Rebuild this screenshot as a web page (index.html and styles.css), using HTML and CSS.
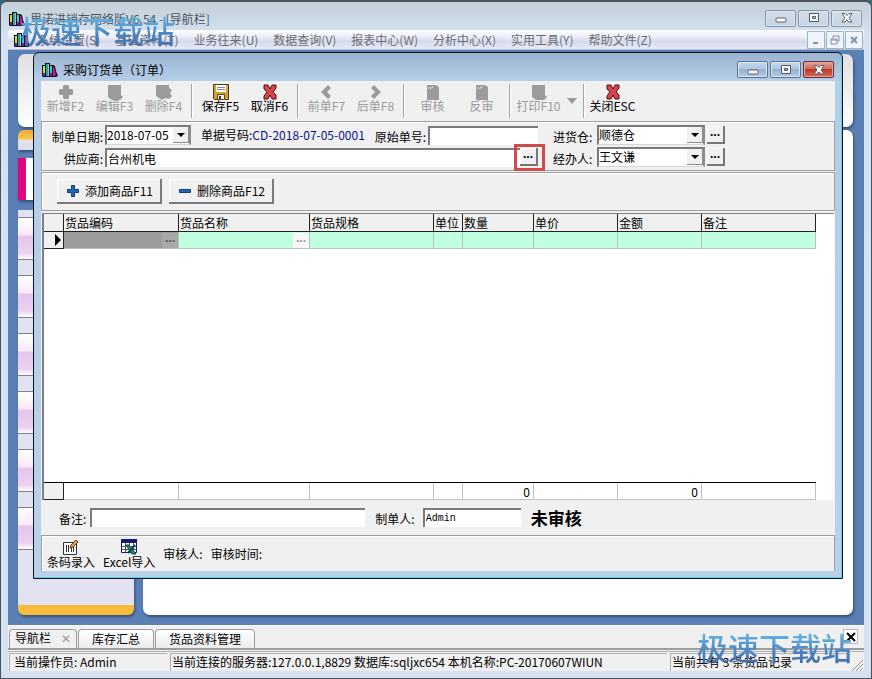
FILE: index.html
```
<!DOCTYPE html>
<html lang="zh-CN">

<head>
    <meta charset="UTF-8">
    <meta name="viewport" content="width=device-width, initial-scale=1.0">
    <title>里诺进销存网络版V6.54</title>
    <link rel="stylesheet" href="styles.css">
</head>

<body>
    <!-- Shared icons -->
    <svg class="sprite" aria-hidden="true">
        <symbol id="icon-books" viewBox="0 0 16 16">
            <path fill="#111" d="M0 3h3V1h5v2h3l2 1 1 5 2 5-2 1H1l-1-1z"/>
            <path fill="#d6df2a" d="M1 4h2v10H1z"/>
            <path fill="#1fa6a8" d="M4 2h2v12H4z"/>
            <path fill="#b8b8c8" d="M6 2h1v12H6z"/>
            <path fill="#28d3d8" d="M8 4h2v10H8z"/>
            <path fill="#c81ea0" d="M11 5l1 0 2 8-2 1h-1z"/>
            <path fill="#7a1fb0" d="M1 11h2v3H1zM8 11h2v3H8z"/>
        </symbol>
        <symbol id="icon-min" viewBox="0 0 12 12">
            <rect x="1" y="6" width="10" height="4" rx="1" fill="#fff" stroke="#5a6270"/>
        </symbol>
        <symbol id="icon-max" viewBox="0 0 12 12">
            <path fill="#fff" stroke="#4f5866" fill-rule="evenodd" d="M1.500 1.500h9v8h-9zM4.500 4.500h3v2h-3z"/>
        </symbol>
        <symbol id="icon-x" viewBox="0 0 12 12">
            <path fill="#fff" stroke="#5a6270" d="M1 1.500h3l2 2 2-2h3L8 6l3 4H8L6 8l-2 2H1l3-4z"/>
        </symbol>
        <symbol id="icon-cross" viewBox="0 0 16 16">
            <path fill="#d9434a" stroke="#4a1114" d="M2 1h4l2 4 2-4h4v3l-3 4 3 3v4h-4l-2-4-2 4H2v-3l3-4-3-3z"/>
        </symbol>
        <symbol id="icon-doc" viewBox="0 0 16 16">
            <path fill="#9b9b9b" d="M1 1h13v10l2 2-3 3H5l-4-3z"/>
        </symbol>
        <symbol id="icon-check" viewBox="0 0 16 16">
            <path fill="#9b9b9b" d="M2 1h9l3 2v13H2z"/>
            <path fill="none" stroke="#ededed" d="M3 4.500l1.500-1 1 1 3-2"/>
        </symbol>
    </svg>

    <div class="app">
        <header class="titlebar">
            <svg class="icon16"><use href="#icon-books"/></svg>
            <h1>里诺进销存网络版V6.54 - [导航栏]</h1>
            <div class="window-buttons">
                <button type="button" aria-label="最小化"><svg><use href="#icon-min"/></svg></button>
                <button type="button" aria-label="最大化"><svg><use href="#icon-max"/></svg></button>
                <button type="button" aria-label="关闭"><svg><use href="#icon-x"/></svg></button>
            </div>
        </header>

        <nav class="menubar">
            <svg class="icon16"><use href="#icon-books"/></svg>
            <a href="#">系统设置(S)</a>
            <a href="#">基础资料(T)</a>
            <a href="#">业务往来(U)</a>
            <a href="#">数据查询(V)</a>
            <a href="#">报表中心(W)</a>
            <a href="#">分析中心(X)</a>
            <a href="#">实用工具(Y)</a>
            <a href="#">帮助文件(Z)</a>
            <div class="child-buttons">
                <button type="button" aria-label="最小化"><svg viewBox="0 0 12 12"><path d="M3 9h5"/></svg></button>
                <button type="button" aria-label="还原"><svg viewBox="0 0 12 12"><path d="M4 4V2h6v5H8M2 5h6v5H2zM2 6h6"/></svg></button>
                <button type="button" aria-label="关闭"><svg viewBox="0 0 12 12"><path d="M3 3l6 6M9 3l-6 6"/></svg></button>
            </div>
        </nav>

        <main class="desktop">
            <div class="nav-top"></div>
            <div class="nav-body">
                <aside class="sidebar">
                    <div class="side-head"></div>
                    <div class="side-active"></div>
                    <div class="side-list">
                        <div class="side-item"></div>
                        <div class="side-item"></div>
                        <div class="side-item"></div>
                        <div class="side-item"></div>
                        <div class="side-item"></div>
                        <div class="side-item"></div>
                    </div>
                </aside>
                <div class="nav-content"></div>
            </div>

            <section class="dialog">
                <div class="dialog-title">
                    <svg class="icon16"><use href="#icon-books"/></svg>
                    <h2>采购订货单（订单）</h2>
                    <div class="window-buttons">
                        <button type="button" aria-label="最小化"><svg><use href="#icon-min"/></svg></button>
                        <button type="button" aria-label="最大化"><svg><use href="#icon-max"/></svg></button>
                        <button type="button" class="close" aria-label="关闭"><svg><use href="#icon-x"/></svg></button>
                    </div>
                </div>

                <div class="dialog-body">
                    <div class="toolbar">
                        <button type="button" disabled>
                            <svg class="icon16" viewBox="0 0 16 16"><path fill="#9b9b9b" d="M5 2l1-1h4l1 1v3h3l1 1v4l-1 1h-3v3l-1 1H6l-1-1v-3H2l-1-1V6l1-1h3z"/></svg>
                            新增F2
                        </button>
                        <button type="button" disabled><svg class="icon16"><use href="#icon-doc"/></svg>编辑F3</button>
                        <button type="button" disabled>
                            <svg class="icon16" viewBox="0 0 16 16"><path fill="#9b9b9b" d="M0 1h13v3l3 2-2 3 2 3-3 3-4-1-3 2-6-4z"/></svg>
                            删除F4
                        </button>
                        <span class="sep"></span>
                        <button type="button">
                            <svg class="icon16" viewBox="0 0 16 16">
                                <path fill="#d9a02b" stroke="#4a3a1a" d="M.5.5h15v15h-14l-1-1z"/>
                                <path fill="#fff" d="M3 1h10v7H3z"/>
                                <path stroke="#8a8a9c" d="M4 3.500h8M4 5.500h8"/>
                                <path fill="#f4f0dc" stroke="#5a4a2a" d="M4.500 10.500h7v5h-7z"/>
                                <path fill="#3a3a4a" d="M6 12h2v3H6z"/>
                            </svg>
                            保存F5
                        </button>
                        <button type="button"><svg class="icon16"><use href="#icon-cross"/></svg>取消F6</button>
                        <span class="sep"></span>
                        <button type="button" disabled>
                            <svg class="icon16" viewBox="0 0 16 16"><path fill="#9b9b9b" d="M9 1l3 3-4 4 4 4-3 3-7-7z"/></svg>
                            前单F7
                        </button>
                        <button type="button" disabled>
                            <svg class="icon16" viewBox="0 0 16 16"><path fill="#9b9b9b" d="M6 1L3 4l4 4-4 4 3 3 7-7z"/></svg>
                            后单F8
                        </button>
                        <span class="sep"></span>
                        <button type="button" disabled><svg class="icon16"><use href="#icon-check"/></svg>审核</button>
                        <button type="button" disabled><svg class="icon16"><use href="#icon-check"/></svg>反审</button>
                        <span class="sep"></span>
                        <button type="button" disabled><svg class="icon16"><use href="#icon-doc"/></svg>打印F10</button>
                        <button type="button" class="more" aria-label="打印选项" disabled>
                            <svg viewBox="0 0 10 6"><path fill="#9b9b9b" d="M0 0h10L5 6z"/></svg>
                        </button>
                        <span class="sep"></span>
                        <button type="button"><svg class="icon16"><use href="#icon-cross"/></svg>关闭ESC</button>
                    </div>

                    <form class="order-form">
                        <div class="form-main">
                            <div class="form-row">
                                <label class="first" for="order-date">制单日期:</label>
                                <span class="combo date">
                                    <select id="order-date"><option>2018-07-05</option></select>
                                    <i></i>
                                </span>
                                <span class="order-no">单据号码:<b>CD-2018-07-05-0001</b></span>
                                <label for="origin-no">原始单号:</label>
                                <input type="text" id="origin-no">
                            </div>
                            <div class="form-row">
                                <label class="first" for="supplier">供应商:</label>
                                <div class="supplier">
                                    <input type="text" id="supplier" value="台州机电">
                                    <button type="button" class="dots" aria-label="选择供应商">...</button>
                                </div>
                            </div>
                        </div>
                        <div class="form-side">
                            <div class="form-row">
                                <label for="store">进货仓:</label>
                                <span class="combo">
                                    <select id="store"><option>顺德仓</option></select>
                                    <i></i>
                                </span>
                                <button type="button" class="dots" aria-label="选择仓库">...</button>
                            </div>
                            <div class="form-row">
                                <label for="handler">经办人:</label>
                                <span class="combo">
                                    <select id="handler"><option>王文谦</option></select>
                                    <i></i>
                                </span>
                                <button type="button" class="dots" aria-label="选择经办人">...</button>
                            </div>
                        </div>
                    </form>

                    <div class="item-actions">
                        <button type="button">
                            <svg viewBox="0 0 12 12"><path fill="#1f66b5" stroke="#123f7a" d="M4.500.5h3v4h4v3h-4v4h-3v-4h-4v-3h4z"/></svg>
                            添加商品F11
                        </button>
                        <button type="button">
                            <svg viewBox="0 0 12 12"><path fill="#1f66b5" stroke="#123f7a" d="M.5 4.500h11v3H.5z"/></svg>
                            删除商品F12
                        </button>
                    </div>

                    <div class="grid">
                        <table>
                            <colgroup>
                                <col class="c-mark"><col class="c-code"><col class="c-name"><col class="c-spec"><col class="c-unit">
                                <col class="c-qty"><col class="c-price"><col class="c-sum"><col class="c-note">
                            </colgroup>
                            <thead>
                                <tr>
                                    <th></th>
                                    <th>货品编码</th>
                                    <th>货品名称</th>
                                    <th>货品规格</th>
                                    <th>单位</th>
                                    <th>数量</th>
                                    <th>单价</th>
                                    <th>金额</th>
                                    <th>备注</th>
                                </tr>
                            </thead>
                            <tbody>
                                <tr>
                                    <td class="mark"><svg viewBox="0 0 6 12"><path d="M0 0l6 6-6 6z"/></svg></td>
                                    <td class="selected"><button type="button" aria-label="选择货品编码">...</button></td>
                                    <td><button type="button" aria-label="选择货品名称">...</button></td>
                                    <td></td>
                                    <td></td>
                                    <td></td>
                                    <td></td>
                                    <td></td>
                                    <td></td>
                                </tr>
                            </tbody>
                        </table>
                        <table class="totals">
                            <colgroup>
                                <col class="c-mark"><col class="c-code"><col class="c-name"><col class="c-spec"><col class="c-unit">
                                <col class="c-qty"><col class="c-price"><col class="c-sum"><col class="c-note">
                            </colgroup>
                            <tbody>
                                <tr>
                                    <td class="mark"></td>
                                    <td></td>
                                    <td></td>
                                    <td></td>
                                    <td></td>
                                    <td>0</td>
                                    <td></td>
                                    <td>0</td>
                                    <td></td>
                                </tr>
                            </tbody>
                        </table>
                    </div>

                    <div class="remark-row">
                        <label for="remark">备注:</label>
                        <input type="text" id="remark" class="remark">
                        <label for="maker">制单人:</label>
                        <input type="text" id="maker" class="maker" value="Admin">
                        <strong>未审核</strong>
                    </div>

                    <div class="dialog-footer">
                        <button type="button">
                            <svg class="icon16" viewBox="0 0 16 16">
                                <path fill="#fff" stroke="#333" d="M.5 3.500h13v12H.5z"/>
                                <path stroke="#333" d="M3.500 6v7M5.500 6v7M8.500 8v5M10.500 6v7"/>
                                <path fill="#e0a040" stroke="#6b3a1a" d="M7 9l1-3 5-5 2 2-5 5z"/>
                            </svg>
                            条码录入
                        </button>
                        <button type="button">
                            <svg class="icon16" viewBox="0 0 16 16">
                                <path fill="#fff" stroke="#1a1a5a" d="M.5.5h15v13H.5z"/>
                                <path fill="#15157a" d="M0 0h16v4H0z"/>
                                <path stroke="#555" d="M1 7.500h14M1 10.500h14M4.500 4v9M8.500 4v9M12.500 4v9"/>
                                <path fill="#1c8f80" stroke="#0b4a44" d="M5 6h3l7 9h-4z"/>
                                <path stroke="#0b4a44" stroke-width="2" d="M14 6l-7 8"/>
                            </svg>
                            Excel导入
                        </button>
                        <span>审核人:</span>
                        <span>审核时间:</span>
                    </div>
                </div>
            </section>
        </main>

        <div class="tabs">
            <a href="#" class="active">导航栏<span>✕</span></a>
            <a href="#">库存汇总</a>
            <a href="#">货品资料管理</a>
            <button type="button" aria-label="关闭标签"><svg viewBox="0 0 10 10"><path d="M1 1l8 8M9 1l-8 8"/></svg></button>
        </div>

        <footer class="statusbar">
            <span class="operator">当前操作员: Admin</span>
            <span class="server">当前连接的服务器:127.0.0.1,8829 数据库:sqljxc654 本机名称:PC-20170607WIUN</span>
            <span class="records">当前共有 3 条货品记录</span>
            <svg viewBox="0 0 12 12"><path d="M1 12L12 1M5 12l7-7M9 12l3-3"/></svg>
        </footer>
    </div>

    <div class="watermark top">极速下载站</div>
    <div class="watermark bottom">极速下载站</div>
</body>

</html>
```

FILE: styles.css
```
* {
    box-sizing: border-box;
}

body {
    margin: 0;
    height: 100vh;
    position: relative;
    overflow: hidden;
    background-color: #2f6f70;
    font-family: "Noto Sans CJK SC", sans-serif;
    font-size: 12px;
    line-height: 16px;
    color: #000;
}

button,
input,
select {
    font: inherit;
    color: inherit;
    margin: 0;
    padding: 0;
    border: 0;
    border-radius: 0;
}

h1,
h2 {
    margin: 0;
    font-size: 12px;
    font-weight: normal;
}

a {
    color: inherit;
    text-decoration: none;
}

.sprite {
    display: none;
}

.icon16 {
    width: 16px;
    height: 16px;
    flex: none;
}

.app {
    height: 100%;
    display: flex;
    flex-direction: column;
    padding: 0 7px 7px;
    border: 1px solid #4a525c;
    border-top-width: 2px;
    border-radius: 7px 7px 0 0;
    background: linear-gradient(#c3cfd8, #d3e1f0 30px, #d5e2f1);
}

/* Title bar and menu */
.titlebar {
    height: 28px;
    flex: none;
    display: flex;
    align-items: center;
    gap: 5px;
    padding: 6px 2px 0 1px;
    color: #4c545c;
}

.titlebar .window-buttons {
    margin-top: -2px;
}

.window-buttons {
    display: flex;
    gap: 2px;
    margin-left: auto;
}

.window-buttons button {
    width: 31px;
    height: 17px;
    display: flex;
    align-items: center;
    justify-content: center;
    border: 1px solid #8795a7;
    border-radius: 2px;
    background: linear-gradient(#d3dee9, #c5d3e1);
    box-shadow: inset 0 0 0 1px #dde7f0;
}

.window-buttons svg {
    width: 12px;
    height: 12px;
}

.menubar {
    height: 20px;
    flex: none;
    display: flex;
    align-items: center;
    gap: 15px;
    padding: 0 1px 0 6px;
    border-bottom: 1px solid #b7bdd0;
    background: linear-gradient(#fff, #e9ebf6 40%, #d6daed 60%, #e8eaf6);
    color: #6c6c70;
}

.menubar .icon16 {
    margin-right: -8px;
}

.child-buttons {
    display: flex;
    gap: 1px;
    margin-left: auto;
}

.child-buttons button {
    width: 18px;
    height: 18px;
    display: flex;
    align-items: center;
    justify-content: center;
    border: 1px solid #9ab4cb;
    background-color: #f0f5fb;
}

.child-buttons svg {
    width: 12px;
    height: 12px;
    fill: none;
    stroke: #8192a3;
    stroke-width: 2;
}

.child-buttons button:nth-child(2) svg {
    stroke-width: 1;
}

/* Navigation page behind the dialog */
.desktop {
    position: relative;
    flex: 1;
    display: flex;
    flex-direction: column;
    gap: 3px;
    min-height: 0;
    padding: 4px 11px 10px 10px;
    background-color: #5b80b5;
}

.nav-top {
    height: 73px;
    flex: none;
    border-radius: 7px;
    background: linear-gradient(#e0e0e3, #fff);
    box-shadow: 1px 2px 3px #344f78;
}

.nav-body {
    flex: 1;
    display: flex;
    gap: 9px;
    min-height: 0;
}

.sidebar {
    width: 116px;
    display: flex;
    flex-direction: column;
}

.side-head {
    height: 20px;
    border-radius: 6px 6px 0 0;
    background: linear-gradient(#f3a93a, #fcc84b 9px, #e2e3ee 10px, #dcdde9);
    box-shadow: 1px 2px 3px #344f78;
}

.side-active {
    height: 42px;
    margin: 8px 0 10px;
    border-left: 8px solid #e0057f;
    background-color: #fff;
    box-shadow: 1px 2px 3px #344f78;
}

.side-list {
    flex: 1;
    display: flex;
    flex-direction: column;
    gap: 15px;
    padding-top: 7px;
    border-bottom: 10px solid #f6bd3d;
    border-radius: 0 0 6px 6px;
    background-color: #e3e2f1;
    box-shadow: 1px 2px 3px #344f78;
}

.side-item {
    height: 43px;
    border: solid #85808e;
    border-width: 1px 0;
    background: linear-gradient(#fff, #fbeaf8 40%, #e5c5ec 45%, #ecd0f0 85%, #fff);
}

.nav-content {
    flex: 1;
    border-radius: 7px;
    background-color: #fff;
    box-shadow: 1px 2px 3px #344f78;
}

/* Order dialog */
.dialog {
    position: absolute;
    inset: 2px 21px 46px 25px;
    display: flex;
    flex-direction: column;
    padding: 0 7px 7px;
    border: 1px solid #0a1420;
    border-radius: 6px 6px 0 0;
    background: linear-gradient(#9bb4cf, #b4cde8 28px, #b9d1ea);
    box-shadow: inset -1px -1px 0 #66cfe0;
}

.dialog-title {
    height: 28px;
    flex: none;
    display: flex;
    align-items: center;
    gap: 5px;
    padding: 5px 1px 0;
}

.dialog-title .window-buttons button {
    border-color: #59708e;
    background: linear-gradient(#c5d7ea, #b0c8e1 45%, #94b1cf 50%, #b4cde6);
}

.dialog-title .window-buttons .close {
    border-color: #6b2a2a;
    background: linear-gradient(#e2a69b, #d0685b 45%, #b83a2b 50%, #d8694f);
    box-shadow: inset 0 0 0 1px #e3a79c;
}

.dialog-body {
    flex: 1;
    display: flex;
    flex-direction: column;
    min-height: 0;
    background-color: #f0f0f0;
}

.toolbar {
    height: 40px;
    flex: none;
    display: flex;
    align-items: center;
}

.toolbar button {
    width: 49px;
    height: 34px;
    display: flex;
    flex-direction: column;
    align-items: center;
    background: none;
    line-height: 12px;
    white-space: nowrap;
}

.toolbar button:disabled {
    color: #9b9b9b;
}

.toolbar .more {
    width: 17px;
    justify-content: center;
}

.more svg {
    width: 10px;
    height: 6px;
}

.sep {
    width: 8px;
    height: 34px;
    display: flex;
    justify-content: center;
}

.sep::before {
    content: "";
    border-left: 1px solid #a5a5a5;
    border-right: 1px solid #fff;
}

.order-form {
    flex: none;
    display: flex;
    gap: 15px;
    padding: 2px 0;
    border: 1px solid #a0a0a0;
    box-shadow: inset 1px 1px 0 #fff;
}

.form-main {
    width: 496px;
}

.form-row {
    height: 22px;
    display: flex;
    align-items: center;
    gap: 2px;
}

.form-row .first {
    width: 61px;
    text-align: right;
}

.form-row label {
    padding-top: 4px;
}

.form-side .form-row label {
    width: 42px;
}

.form-row input {
    flex: 1;
    min-width: 0;
}

.order-no {
    margin: 0 8px;
    white-space: nowrap;
}

.order-no b {
    font-weight: normal;
    color: #10108c;
}

input[type="text"] {
    height: 19px;
    padding: 0 1px;
    border: solid #7a7a7a;
    border-width: 2px 0 0 2px;
    outline: none;
    background-color: #fff;
}

.supplier {
    flex: 1;
    display: flex;
    position: relative;
}

/* Marks the supplier picker */
.supplier::after {
    content: "";
    position: absolute;
    top: -4px;
    right: -7px;
    width: 25px;
    height: 21px;
    border: 3px solid #cf4b4b;
    pointer-events: none;
}

.combo {
    width: 108px;
    height: 20px;
    display: grid;
    border: 2px solid #7a7a7a;
    border-right-color: #8e8e8e;
    border-bottom: 1px solid #d8d8d8;
    background-color: #fff;
}

.combo.date {
    width: 86px;
}

.combo select {
    grid-area: 1 / 1;
    width: 100%;
    height: 16px;
    appearance: none;
    background: none;
    outline: none;
}

.combo i {
    grid-area: 1 / 1;
    justify-self: end;
    width: 16px;
    height: 16px;
    display: grid;
    place-items: center;
    border: solid #8c8c8c;
    border-width: 0 1px 1px 0;
    background-color: #f0f0f0;
    pointer-events: none;
}

.combo i::before {
    content: "";
    border: 4px solid transparent;
    border-top-color: #000;
    border-bottom: 0;
}

.dots {
    width: 18px;
    height: 18px;
    padding-bottom: 4px;
    border: solid #777;
    border-width: 0 2px 2px 0;
    background-color: #f0f0f0;
    font-family: "Liberation Sans", sans-serif;
    font-weight: bold;
    line-height: 12px;
    box-shadow: inset 1px 1px 0 #fff;
}

.item-actions {
    height: 39px;
    flex: none;
    display: flex;
    align-items: center;
    gap: 7px;
    margin-top: 1px;
    padding-left: 15px;
    border: 1px solid #a0a0a0;
    box-shadow: inset 1px 1px 0 #fff;
}

.item-actions button {
    width: 105px;
    height: 25px;
    display: flex;
    align-items: center;
    justify-content: flex-end;
    gap: 6px;
    padding-right: 7px;
    border: solid #7a7a7a;
    border-width: 0 2px 2px 0;
    background-color: #f0f0f0;
    box-shadow: inset 1px 1px 0 #fff;
    white-space: nowrap;
}

.item-actions svg {
    width: 12px;
    height: 12px;
}

/* Item grid */
.grid {
    flex: 1;
    display: flex;
    flex-direction: column;
    justify-content: space-between;
    min-height: 0;
    margin: 2px 1px 0;
    border: solid #808080;
    border-width: 1px 0 0 2px;
    background-color: #fff;
}

.grid table {
    width: 772px;
    table-layout: fixed;
    border-collapse: separate;
    border-spacing: 0;
}

.c-mark { width: 20px; }
.c-code { width: 115px; }
.c-name { width: 131px; }
.c-spec { width: 124px; }
.c-unit { width: 29px; }
.c-qty { width: 71px; }
.c-price { width: 84px; }
.c-sum { width: 84px; }
.c-note { width: 114px; }

.grid th {
    height: 18px;
    padding: 0 1px;
    border: solid #222;
    border-width: 0 1px 1px 0;
    background-color: #f0f0f0;
    font-weight: normal;
    line-height: 15px;
    text-align: left;
    white-space: nowrap;
}

.grid td {
    height: 17px;
    padding: 0;
    border: solid #b5c4bc;
    border-width: 0 1px 1px 0;
    background-color: #c0ffdf;
    line-height: 15px;
    text-align: right;
}

.grid td.mark {
    border-color: #222;
    background-color: #f0f0f0;
}

.mark svg {
    width: 6px;
    height: 12px;
    display: block;
    margin: 0 2px 0 auto;
}

.grid td.selected {
    background-color: #9c9c9c;
}

.grid td button {
    width: 16px;
    height: 15px;
    display: block;
    margin-left: auto;
    padding-bottom: 4px;
    background-color: #f7f7f7;
    color: #999;
    font-family: "Liberation Sans", sans-serif;
    font-weight: bold;
    line-height: 11px;
}

.grid td.selected button {
    background-color: #a8a8a8;
    color: #555;
}

.grid .totals {
    border-top: 1px solid #000;
}

.totals td {
    border-color: #c0c0c0;
    background-color: #fff;
    padding-right: 3px;
}

/* Bottom of the dialog */
.remark-row {
    height: 35px;
    flex: none;
    display: flex;
    align-items: center;
    padding-left: 18px;
}

.remark-row label {
    padding-top: 2px;
}

.remark-row .remark {
    width: 275px;
    margin: 0 10px 0 4px;
}

.remark-row .maker {
    width: 98px;
    margin: 0 10px 0 8px;
}

.maker {
    font-family: "Liberation Mono", monospace;
    font-size: 10px;
}

.remark-row strong {
    font-size: 17px;
    line-height: 20px;
}

.dialog-footer {
    height: 36px;
    flex: none;
    display: flex;
    align-items: center;
    gap: 8px;
    padding-left: 5px;
    border: solid #a0a0a0;
    border-width: 1px 1px 0;
    box-shadow: inset 1px 1px 0 #fff;
}

.dialog-footer button {
    display: flex;
    flex-direction: column;
    align-items: center;
    background: none;
    line-height: 14px;
    white-space: nowrap;
}

/* Page tabs */
.tabs {
    height: 27px;
    flex: none;
    display: flex;
    align-items: flex-start;
    gap: 1px;
    padding: 3px 6px 0 1px;
    border-top: 1px solid #fff;
    border-bottom: 1px solid #b0b0b0;
    background: linear-gradient(#f0f0f0 22px, #9c9c9c 22px, #9c9c9c 24px, #f0f0f0 24px);
}

.tabs a {
    height: 19px;
    padding: 1px 13px;
    border: 1px solid #9c9c9c;
    border-bottom: 0;
    border-radius: 4px 4px 0 0;
    background: linear-gradient(#fff, #ececec);
}

.tabs .active {
    padding: 0 5px;
    background: #f0f0f0;
}

.tabs span {
    margin-left: 10px;
    color: #999;
}

.tabs button {
    width: 15px;
    height: 15px;
    display: grid;
    place-items: center;
    margin-left: auto;
    border: 1px solid #b8b8b8;
    background-color: #fff;
}

.tabs svg {
    width: 10px;
    height: 10px;
    stroke: #000;
    stroke-width: 2;
}

/* Status bar */
.statusbar {
    height: 19px;
    flex: none;
    display: flex;
    gap: 3px;
    padding: 1px 1px 0;
    background-color: #f0f0f0;
}

.statusbar span {
    padding-left: 1px;
    border: solid #b0b0b0;
    border-width: 1px 0 0 1px;
    white-space: nowrap;
}

.statusbar .operator {
    width: 158px;
    padding-left: 4px;
}

.statusbar .server {
    flex: 1;
}

.statusbar .records {
    width: 178px;
}

.statusbar svg {
    width: 12px;
    height: 12px;
    align-self: flex-end;
    stroke: #8f8f8f;
}

.watermark {
    position: absolute;
    font-size: 31px;
    font-weight: 500;
    line-height: 36px;
    background: linear-gradient(#6cc4e8, #4a86c6 60%, #4569a8);
    background-clip: text;
    -webkit-background-clip: text;
    color: transparent;
    pointer-events: none;
}

.watermark.top {
    top: 12px;
    left: 20px;
}

.watermark.bottom {
    right: 20px;
    bottom: 14px;
}
```
